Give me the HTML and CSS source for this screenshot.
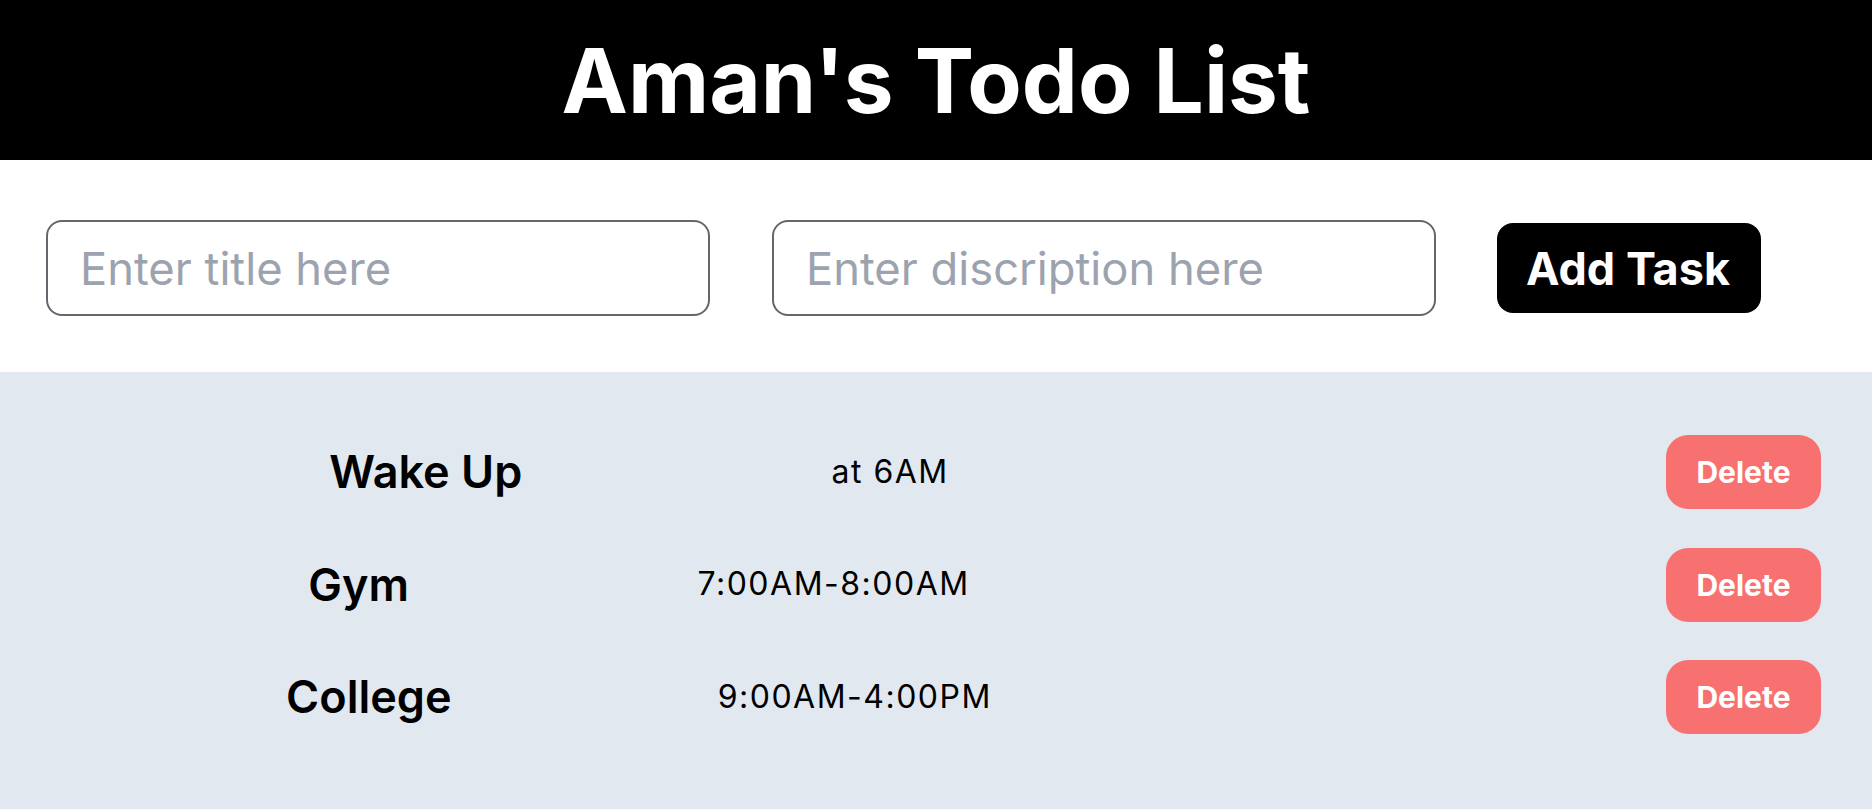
FILE: index.html
```html
<!DOCTYPE html>
<html lang="en">
<head>
<meta charset="utf-8">
<title>Aman's Todo List</title>
<link rel="stylesheet" href="styles.css">
</head>
<body>
  <header class="header">
    <h1 class="header-title">Aman's Todo List</h1>
  </header>
  <form class="task-form">
    <input class="task-input" type="text" placeholder="Enter title here">
    <input class="task-input" type="text" placeholder="Enter discription here">
    <button class="add-btn" type="button">Add Task</button>
  </form>
  <main class="task-list">
    <div class="task-row">
      <div class="task-info">
        <h2 class="task-title">Wake Up</h2>
        <p class="task-desc">at 6AM</p>
      </div>
      <button class="delete-btn" type="button">Delete</button>
    </div>
    <div class="task-row">
      <div class="task-info">
        <h2 class="task-title">Gym</h2>
        <p class="task-desc">7:00AM-8:00AM</p>
      </div>
      <button class="delete-btn" type="button">Delete</button>
    </div>
    <div class="task-row">
      <div class="task-info">
        <h2 class="task-title">College</h2>
        <p class="task-desc">9:00AM-4:00PM</p>
      </div>
      <button class="delete-btn" type="button">Delete</button>
    </div>
  </main>
</body>
</html>
```
FILE: styles.css
```css
* { box-sizing: border-box; }
html, body {
  margin: 0;
  padding: 0;
  height: 100%;
}
body {
  font-family: Inter, "Noto Sans", "Liberation Sans", sans-serif;
  background: #e2e8f0;
  color: #000;
  display: flex;
  flex-direction: column;
}
.header {
  background: #000;
  height: 160px;
  display: flex;
  align-items: center;
  justify-content: center;
}
.header-title {
  margin: 0;
  color: #fff;
  font-size: 89px;
  font-weight: 700;
  line-height: 1;
}
.task-form {
  background: #fff;
  height: 212px;
  margin: 0;
  padding: 4px 0 0 46px;
  display: flex;
  align-items: center;
  gap: 62px;
}
.task-input {
  width: 664px;
  height: 96px;
  border: 2px solid #66666f;
  border-radius: 16px;
  padding: 0 32px;
  font-family: inherit;
  font-size: 45.3px;
  color: #000;
  background: #fff;
  outline: none;
}
.task-input::placeholder { color: #9ca3af; }
.add-btn {
  width: 264px;
  height: 90px;
  margin-left: -1px;
  border: none;
  border-radius: 16px;
  background: #000;
  color: #fff;
  font-family: inherit;
  font-size: 45px;
  font-weight: 700;
  padding: 0 2px 0 0;
  cursor: pointer;
}
.task-list {
  flex: 1;
  background: #e2e8f0;
  padding-top: 63px;
  display: flex;
  flex-direction: column;
  gap: 38.5px;
}
.task-row {
  display: flex;
  align-items: center;
  padding-left: 20px;
  padding-right: 51px;
}
.task-info {
  width: 1238px;
  display: flex;
  align-items: center;
  justify-content: space-evenly;
}
.task-title {
  margin: 0;
  font-size: 45px;
  font-weight: 600;
  line-height: 1.2;
}
.task-desc {
  margin: 0;
  font-size: 32px;
  font-weight: 400;
  letter-spacing: 1.5px;
  line-height: 1.2;
}
.delete-btn {
  margin-left: auto;
  width: 155px;
  height: 74px;
  border: none;
  border-radius: 22px;
  background: #f87171;
  color: #fff;
  font-family: inherit;
  font-size: 30px;
  font-weight: 700;
  padding: 0;
  cursor: pointer;
}
```
